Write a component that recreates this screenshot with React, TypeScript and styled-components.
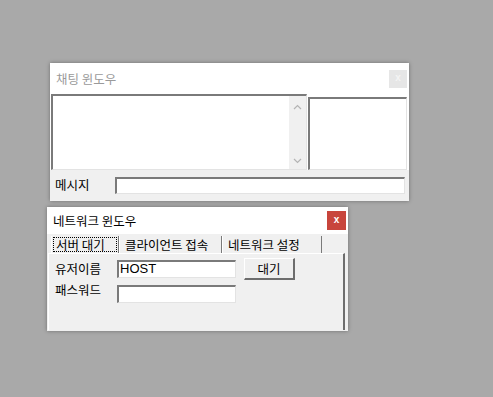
import React from 'react';
import styled, { createGlobalStyle } from 'styled-components';

const GlobalStyle = createGlobalStyle`
    html, body {
        margin: 0;
        padding: 0;
        background: #a9a9a9;
    }
    body {
        font-family: "Noto Sans CJK KR", "Noto Sans", sans-serif;
        font-size: 12px;
        color: #000;
    }
`;

const Chevron = ({ up }: { up?: boolean }) => (
    <svg width="9" height="6" viewBox="0 0 9 6">
        <polyline
            points={up ? '1,5 4.5,1.5 8,5' : '1,1 4.5,4.5 8,1'}
            fill="none"
            stroke="#b4b4b4"
            strokeWidth="1.2"
        />
    </svg>
);

const App = () => {
    return (
        <Desktop>
            <GlobalStyle />

            <Window $left={50} $top={63} $width={359} $height={138}>
                <TitleBar $height={31}>
                    <Title $inactive>채팅 윈도우</Title>
                    <CloseButton $inactive>x</CloseButton>
                </TitleBar>
                <ChatTop>
                    <ChatLog>
                        <LogText />
                        <ScrollBar>
                            <Chevron up />
                            <Chevron />
                        </ScrollBar>
                    </ChatLog>
                    <UserList />
                </ChatTop>
                <MessageRow>
                    <Label $width={60}>메시지</Label>
                    <Input $width={290} $height={17} />
                </MessageRow>
            </Window>

            <Window $left={47} $top={207} $width={301} $height={124}>
                <TitleBar $height={27}>
                    <Title>네트워크 윈도우</Title>
                    <CloseButton>x</CloseButton>
                </TitleBar>
                <WindowBody>
                    <TabBar>
                        <Tab $width={68} $active><TabFocus>서버 대기</TabFocus></Tab>
                        <Tab $width={103}>클라이언트 접속</Tab>
                        <Tab $width={100}>네트워크 설정</Tab>
                    </TabBar>
                    <TabPanel>
                        <Form>
                            <Label>유저이름</Label>
                            <Input $width={119} $height={18}>HOST</Input>
                            <Button>대기</Button>
                            <Label $up>패스워드</Label>
                            <Input $width={119} $height={18} />
                        </Form>
                    </TabPanel>
                </WindowBody>
            </Window>
        </Desktop>
    );
};

export default App;

const Desktop = styled.div`
    position: relative;
    width: 493px;
    height: 397px;
    background: #a9a9a9;
    overflow: hidden;
`;

const Window = styled.div<{ $left: number; $top: number; $width: number; $height: number }>`
    position: absolute;
    left: ${p => p.$left}px;
    top: ${p => p.$top}px;
    width: ${p => p.$width}px;
    height: ${p => p.$height}px;
    background: #f0f0f0;
    box-shadow: 0 0 4px rgba(0, 0, 0, 0.35);
    display: flex;
    flex-direction: column;
    overflow: hidden;
`;

const TitleBar = styled.div<{ $height: number }>`
    height: ${p => p.$height}px;
    flex: none;
    background: #fff;
    display: flex;
    align-items: center;
    justify-content: space-between;
    padding: 0 2px 0 6px;
`;

const Title = styled.div<{ $inactive?: boolean }>`
    font-size: 12.5px;
    color: ${p => (p.$inactive ? '#9a9a9a' : '#000')};
    line-height: 16px;
`;

const CloseButton = styled.div<{ $inactive?: boolean }>`
    width: ${p => (p.$inactive ? 18 : 19)}px;
    height: ${p => (p.$inactive ? 18 : 19)}px;
    background: ${p => (p.$inactive ? '#e6e6e6' : '#c8453c')};
    color: ${p => (p.$inactive ? '#f4f4f4' : '#fff')};
    font-family: "Liberation Sans", Arial, sans-serif;
    font-weight: bold;
    font-size: 10px;
    display: flex;
    align-items: center;
    justify-content: center;
    line-height: 1;
    padding-bottom: 2px;
    box-sizing: border-box;
`;

const ChatTop = styled.div`
    height: 76px;
    flex: none;
    display: flex;
    align-items: flex-start;
    gap: 1px;
    padding-left: 1px;
    background: #fff;
`;

const ChatLog = styled.div`
    width: 256px;
    height: 76px;
    box-sizing: border-box;
    display: flex;
    border-style: solid;
    border-width: 2px 1px 1px 2px;
    border-color: #7a7a7a #e3e3e3 #e3e3e3 #7a7a7a;
    background: #fff;
`;

const LogText = styled.div`
    flex: 1;
`;

const ScrollBar = styled.div`
    width: 17px;
    background: #f0f0f0;
    display: flex;
    flex-direction: column;
    justify-content: space-between;
    align-items: center;
    padding: 8px 0 5px;
`;

const UserList = styled.div`
    width: 99px;
    height: 73px;
    margin-top: 3px;
    box-sizing: border-box;
    border-style: solid;
    border-width: 2px 1px 1px 2px;
    border-color: #7a7a7a #e3e3e3 #e3e3e3 #7a7a7a;
    background: #fff;
`;

const MessageRow = styled.div`
    flex: 1;
    display: flex;
    align-items: center;
    padding: 0 0 1px 5px;
    background: #f0f0f0;
`;

const Label = styled.div<{ $width?: number; $up?: boolean }>`
    ${p => (p.$width ? `width: ${p.$width}px;` : '')}
    font-size: 12.5px;
    line-height: 16px;
    ${p => (p.$up ? 'align-self: start; margin-top: -3px;' : '')}
`;

const Input = styled.div<{ $width: number; $height: number }>`
    width: ${p => p.$width}px;
    height: ${p => p.$height}px;
    box-sizing: border-box;
    background: #fff;
    border-style: solid;
    border-width: 2px 1px 1px 2px;
    border-color: #7a7a7a #e3e3e3 #e3e3e3 #7a7a7a;
    font-family: "Liberation Sans", Arial, sans-serif;
    font-size: 13px;
    line-height: 14px;
    padding-left: 1px;
    overflow: hidden;
`;

const WindowBody = styled.div`
    flex: 1;
    display: flex;
    flex-direction: column;
    padding: 2px 3px 1px 1px;
`;

const TabBar = styled.div`
    display: flex;
    height: 17px;
    padding-left: 3px;
    flex: none;
`;

const Tab = styled.div<{ $width: number; $active?: boolean }>`
    width: ${p => p.$width}px;
    box-sizing: border-box;
    border-left: 1px solid #fff;
    border-right: 1px solid #7a7a7a;
    padding: 0 ${p => (p.$active ? 1 : 5)}px;
    font-size: 12.5px;
    line-height: 16px;
    white-space: nowrap;
    display: flex;
    align-items: center;
`;

const TabFocus = styled.span`
    border: 1px dotted #000;
    padding: 0 2px;
    line-height: 13px;
    height: 15px;
    box-sizing: border-box;
    width: 100%;
`;

const TabPanel = styled.div`
    flex: 1;
    border-style: solid;
    border-width: 1px 2px 0 1px;
    border-color: #fff #6d6d6d #6d6d6d #fff;
    padding: 4px 0 0 6px;
`;

const Form = styled.div`
    display: grid;
    grid-template-columns: 62px 119px 51px;
    grid-template-rows: 22px 18px;
    column-gap: 8px;
    row-gap: 5px;
    align-items: center;
    & > :nth-child(2) {
        margin-left: -8px;
    }
    & > :nth-child(5) {
        margin-left: -8px;
    }
`;

const Button = styled.div`
    width: 51px;
    height: 22px;
    box-sizing: border-box;
    margin-left: -8px;
    background: #efefef;
    border-style: solid;
    border-width: 1px 2px 2px 1px;
    border-color: #fff #6d6d6d #6d6d6d #fff;
    display: flex;
    align-items: center;
    justify-content: center;
    font-size: 12.5px;
`;
